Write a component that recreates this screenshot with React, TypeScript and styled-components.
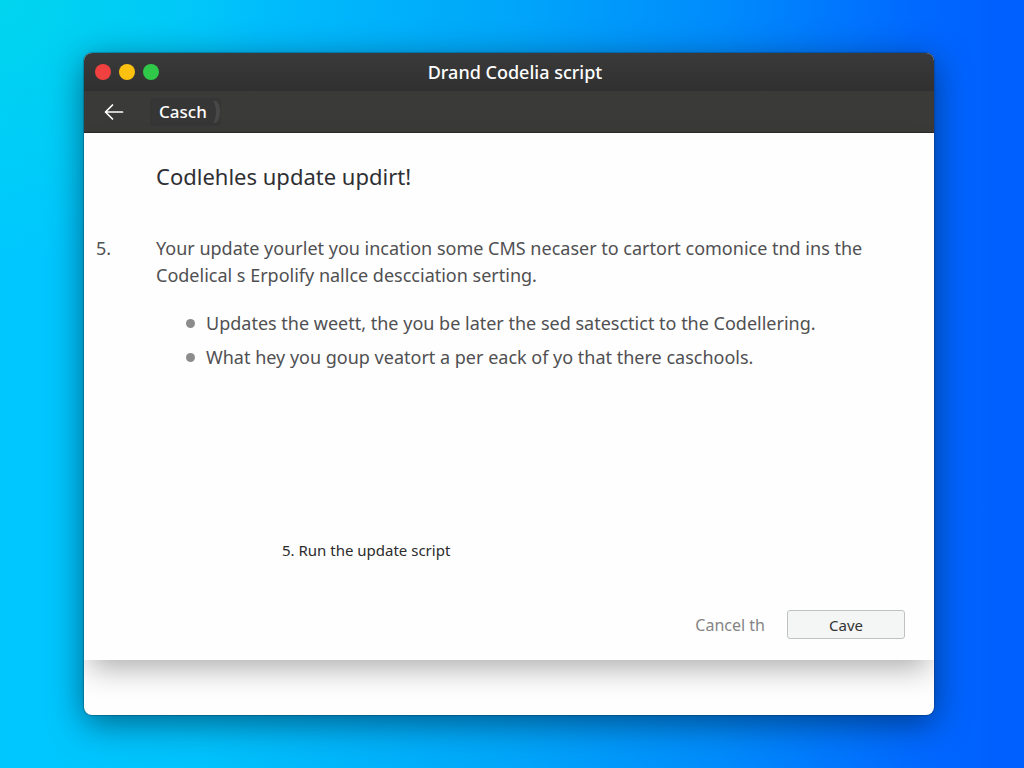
import React from "react";
import styled, { createGlobalStyle } from "styled-components";

const GlobalStyle = createGlobalStyle`
  * { box-sizing: border-box; }
  body { margin: 0; font-family: "Noto Sans", "Open Sans", sans-serif; }
  h1, h2, p, ul, ol { margin: 0; padding: 0; font-weight: 400; }
  button { font: inherit; cursor: pointer; }
`;

const Desktop = styled.div`
  min-height: 100vh;
  display: flex;
  padding: 53px 90px 53px 84px;
  background:
    radial-gradient(circle at 0 0, rgba(0, 214, 236, 0.9), rgba(0, 214, 236, 0) 260px),
    linear-gradient(90deg, #00c8ff 0%, #00c2fc 20%, #00a6fa 50%, #008cfc 70%, #0068ff 90%, #0060ff 97%);
`;

const Window = styled.main`
  flex: 1;
  min-width: 0;
  display: flex;
  flex-direction: column;
  overflow: hidden;
  border-radius: 8px;
  background: #fefefe;
  box-shadow: 0 0 1px 1px rgba(0, 40, 60, 0.3), 0 8px 34px rgba(0, 20, 40, 0.55);
`;

const TitleBar = styled.header`
  display: grid;
  grid-template-columns: 80px 1fr 68px;
  align-items: center;
  height: 38px;
  padding: 0 11px;
  background: linear-gradient(#3a3a3a, #303030);
`;

const Lights = styled.div`
  display: flex;
  gap: 8px;
`;

const Light = styled.button<{ $color: string }>`
  width: 16px;
  height: 16px;
  padding: 0;
  border: 0;
  border-radius: 50%;
  background: ${(p) => p.$color};
`;

const Title = styled.h1`
  color: #fff;
  font-size: 18px;
  font-weight: 500;
  line-height: 24px;
  text-align: center;
`;

const Toolbar = styled.nav`
  display: flex;
  align-items: center;
  gap: 24px;
  height: 42px;
  padding: 0 18px;
  background: #3a3a39;
  border-bottom: 1px solid #2a2a2a;
`;

const BackButton = styled.button`
  display: flex;
  padding: 0;
  border: 0;
  background: none;
  color: #fff;
`;

const Crumb = styled.button`
  display: flex;
  align-items: center;
  gap: 6px;
  height: 28px;
  padding: 0 0 0 9px;
  border: 0;
  border-radius: 4px;
  background: #363636;
  color: #fff;
  font-size: 17px;
  font-weight: 500;
`;

const Content = styled.section`
  flex: 1;
  display: flex;
  flex-direction: column;
  padding: 28px 29px 21px 12px;
  background: #fefefe;
  box-shadow: 0 14px 28px -6px rgba(0, 0, 0, 0.32);
`;

const Heading = styled.h2`
  padding-left: 60px;
  color: #2f2f33;
  font-size: 22px;
  line-height: 30px;
`;

const Step = styled.div`
  display: grid;
  grid-template-columns: 60px 1fr;
  margin-top: 44px;
  color: #505052;
  font-size: 18px;
  line-height: 27px;
`;

const Bullets = styled.ul`
  margin-top: 17px;
  padding-left: 30px;
  list-style: none;
`;

const Bullet = styled.li`
  display: flex;
  align-items: center;
  gap: 11px;
  line-height: 34px;

  &::before {
    content: "";
    width: 9px;
    height: 9px;
    border-radius: 50%;
    background: #8c8c8c;
  }
`;

const Note = styled.p`
  margin-top: auto;
  padding-left: 186px;
  color: #2c2c2c;
  font-size: 15px;
  line-height: 24px;
`;

const Actions = styled.div`
  display: flex;
  justify-content: flex-end;
  align-items: center;
  gap: 22px;
  margin-top: 48px;
`;

const CancelButton = styled.button`
  padding: 0;
  border: 0;
  background: none;
  color: #858585;
  font-size: 16px;
  line-height: 24px;
`;

const SaveButton = styled.button`
  width: 118px;
  height: 29px;
  padding: 0;
  border: 1px solid #c0c2c2;
  border-radius: 3px;
  background: #f4f5f5;
  color: #333;
  font-size: 15px;
`;

const Shelf = styled.footer`
  height: 55px;
`;

export default function App() {
  return (
    <>
      <GlobalStyle />
      <Desktop>
        <Window>
          <TitleBar>
            <Lights>
              <Light $color="#f04040" aria-label="Close" />
              <Light $color="#fcc010" aria-label="Minimize" />
              <Light $color="#30c848" aria-label="Zoom" />
            </Lights>
            <Title>Drand Codelia script</Title>
          </TitleBar>
          <Toolbar>
            <BackButton aria-label="Back">
              <svg width="24" height="20" viewBox="0 0 24 20" fill="none" stroke="currentColor" strokeWidth="1.700" strokeLinecap="round" strokeLinejoin="round">
                <path d="M20.500 10H3.500M10.500 3 3.500 10l7 7" />
              </svg>
            </BackButton>
            <Crumb>
              Casch
              <svg width="8" height="24" viewBox="0 0 8 24" fill="#484848" aria-hidden="true">
                <path d="M0 1h3q4 2 4 11T2 23H0q3-4 3-11T0 1Z" />
              </svg>
            </Crumb>
          </Toolbar>
          <Content>
            <Heading>Codlehles update updirt!</Heading>
            <Step>
              <span>5.</span>
              <div>
                <p>
                  Your update yourlet you incation some CMS necaser to cartort comonice tnd ins the
                  <br />
                  Codelical s Erpolify nallce descciation serting.
                </p>
                <Bullets>
                  <Bullet>Updates the weett, the you be later the sed satesctict to the Codellering.</Bullet>
                  <Bullet>What hey you goup veatort a per eack of yo that there caschools.</Bullet>
                </Bullets>
              </div>
            </Step>
            <Note>5. Run the update script</Note>
            <Actions>
              <CancelButton>Cancel th</CancelButton>
              <SaveButton>Cave</SaveButton>
            </Actions>
          </Content>
          <Shelf />
        </Window>
      </Desktop>
    </>
  );
}
